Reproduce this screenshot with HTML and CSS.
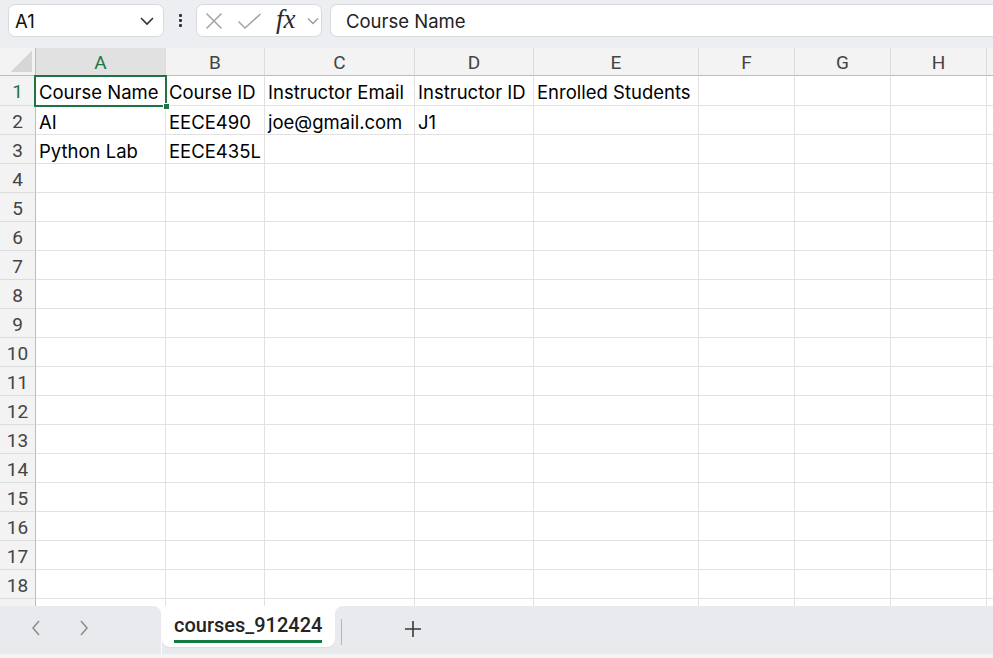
FILE: index.html
```html
<!DOCTYPE html>
<html>
<head>
<meta charset="utf-8">
<link rel="stylesheet" href="styles.css">
</head>
<body>
<div class="app">
  <div class="toolbar">
    <div class="namebox">
      <span class="nb-text">A1</span>
      <svg class="nb-chev" width="16" height="10" viewBox="0 0 16 10"><path d="M2 2 L8 8 L14 2" fill="none" stroke="#333" stroke-width="1.6"/></svg>
    </div>
    <div class="kebab"><i></i><i></i><i></i></div>
    <div class="fbox">
      <svg class="ic-x" width="18" height="18" viewBox="0 0 18 18"><path d="M1.5 1.5 L16.5 16.5 M16.5 1.5 L1.5 16.5" stroke="#a3a3a3" stroke-width="1.5" fill="none"/></svg>
      <svg class="ic-check" width="25" height="16" viewBox="0 0 25 16"><path d="M1.5 8.5 L8 15 L23.5 1" stroke="#a3a3a3" stroke-width="1.5" fill="none"/></svg>
      <span class="fx">fx</span>
      <svg class="ic-chev" width="12" height="8" viewBox="0 0 12 8"><path d="M1 1.5 L6 6.5 L11 1.5" stroke="#9a9a9a" stroke-width="1.3" fill="none"/></svg>
    </div>
    <div class="finput">Course Name</div>
  </div>

  <div class="sheet">
    <div class="grid">
      <div class="corner"></div><div class="ch sel">A</div><div class="ch">B</div><div class="ch">C</div><div class="ch">D</div><div class="ch">E</div><div class="ch">F</div><div class="ch">G</div><div class="ch">H</div><div class="ch"></div>
      <div class="rh sel">1</div><div class="c">Course Name</div><div class="c">Course ID</div><div class="c">Instructor Email</div><div class="c">Instructor ID</div><div class="c">Enrolled Students</div><div class="c"></div><div class="c"></div><div class="c"></div><div class="c"></div>
      <div class="rh">2</div><div class="c">AI</div><div class="c">EECE490</div><div class="c">joe@gmail.com</div><div class="c">J1</div><div class="c"></div><div class="c"></div><div class="c"></div><div class="c"></div><div class="c"></div>
      <div class="rh">3</div><div class="c">Python Lab</div><div class="c">EECE435L</div><div class="c"></div><div class="c"></div><div class="c"></div><div class="c"></div><div class="c"></div><div class="c"></div><div class="c"></div>
      <div class="rh">4</div><div class="c"></div><div class="c"></div><div class="c"></div><div class="c"></div><div class="c"></div><div class="c"></div><div class="c"></div><div class="c"></div><div class="c"></div>
      <div class="rh">5</div><div class="c"></div><div class="c"></div><div class="c"></div><div class="c"></div><div class="c"></div><div class="c"></div><div class="c"></div><div class="c"></div><div class="c"></div>
      <div class="rh">6</div><div class="c"></div><div class="c"></div><div class="c"></div><div class="c"></div><div class="c"></div><div class="c"></div><div class="c"></div><div class="c"></div><div class="c"></div>
      <div class="rh">7</div><div class="c"></div><div class="c"></div><div class="c"></div><div class="c"></div><div class="c"></div><div class="c"></div><div class="c"></div><div class="c"></div><div class="c"></div>
      <div class="rh">8</div><div class="c"></div><div class="c"></div><div class="c"></div><div class="c"></div><div class="c"></div><div class="c"></div><div class="c"></div><div class="c"></div><div class="c"></div>
      <div class="rh">9</div><div class="c"></div><div class="c"></div><div class="c"></div><div class="c"></div><div class="c"></div><div class="c"></div><div class="c"></div><div class="c"></div><div class="c"></div>
      <div class="rh">10</div><div class="c"></div><div class="c"></div><div class="c"></div><div class="c"></div><div class="c"></div><div class="c"></div><div class="c"></div><div class="c"></div><div class="c"></div>
      <div class="rh">11</div><div class="c"></div><div class="c"></div><div class="c"></div><div class="c"></div><div class="c"></div><div class="c"></div><div class="c"></div><div class="c"></div><div class="c"></div>
      <div class="rh">12</div><div class="c"></div><div class="c"></div><div class="c"></div><div class="c"></div><div class="c"></div><div class="c"></div><div class="c"></div><div class="c"></div><div class="c"></div>
      <div class="rh">13</div><div class="c"></div><div class="c"></div><div class="c"></div><div class="c"></div><div class="c"></div><div class="c"></div><div class="c"></div><div class="c"></div><div class="c"></div>
      <div class="rh">14</div><div class="c"></div><div class="c"></div><div class="c"></div><div class="c"></div><div class="c"></div><div class="c"></div><div class="c"></div><div class="c"></div><div class="c"></div>
      <div class="rh">15</div><div class="c"></div><div class="c"></div><div class="c"></div><div class="c"></div><div class="c"></div><div class="c"></div><div class="c"></div><div class="c"></div><div class="c"></div>
      <div class="rh">16</div><div class="c"></div><div class="c"></div><div class="c"></div><div class="c"></div><div class="c"></div><div class="c"></div><div class="c"></div><div class="c"></div><div class="c"></div>
      <div class="rh">17</div><div class="c"></div><div class="c"></div><div class="c"></div><div class="c"></div><div class="c"></div><div class="c"></div><div class="c"></div><div class="c"></div><div class="c"></div>
      <div class="rh">18</div><div class="c"></div><div class="c"></div><div class="c"></div><div class="c"></div><div class="c"></div><div class="c"></div><div class="c"></div><div class="c"></div><div class="c"></div>
      <div class="rh"></div><div class="c"></div><div class="c"></div><div class="c"></div><div class="c"></div><div class="c"></div><div class="c"></div><div class="c"></div><div class="c"></div><div class="c"></div>
    </div>
    <div class="selection"><span class="handle"></span></div>
  </div>

  <div class="tabbar">
    <div class="nav">
      <svg width="10" height="16" viewBox="0 0 10 16"><path d="M8 1 L2 8 L8 15" fill="none" stroke="#8a8a8a" stroke-width="1.5"/></svg>
      <svg width="10" height="16" viewBox="0 0 10 16"><path d="M2 1 L8 8 L2 15" fill="none" stroke="#8a8a8a" stroke-width="1.5"/></svg>
    </div>
    <div class="tabwrap"><div class="tab"><span class="tab-label">courses_912424</span></div></div>
    <div class="rest">
      <div class="sep"></div>
      <svg class="plus" width="18" height="18" viewBox="0 0 18 18"><path d="M9 1 V17 M1 9 H17" stroke="#3a3a3a" stroke-width="1.6" fill="none"/></svg>
    </div>
  </div>
  <div class="status"></div>
</div>
</body>
</html>
```

FILE: styles.css
```css
* { box-sizing: border-box; }
html, body { margin: 0; padding: 0; }
body {
  width: 993px;
  height: 658px;
  overflow: hidden;
  font-family: Inter, "Open Sans", Arial, sans-serif;
  color: #111;
  background: #fff;
}
.app { display: flex; flex-direction: column; width: 993px; height: 658px; }

/* toolbar */
.toolbar {
  height: 48px;
  flex: none;
  background: #eceef1;
  display: flex;
  align-items: flex-start;
  padding: 4px 0 0 8px;
}
.namebox {
  width: 156px;
  height: 33px;
  background: #fff;
  border: 1px solid #d8dadd;
  border-radius: 7px;
  display: flex;
  align-items: center;
  justify-content: space-between;
  padding: 0 8px 0 6px;
  font-size: 18.5px;
}
.nb-text { color: #111; }
.kebab {
  width: 32px;
  height: 33px;
  display: flex;
  flex-direction: column;
  align-items: center;
  justify-content: center;
  gap: 2px;
}
.kebab i { display: block; width: 3px; height: 3px; background: #333; border-radius: 1px; }
.fbox {
  width: 126px;
  height: 33px;
  background: #fff;
  border: 1px solid #d8dadd;
  border-radius: 7px;
  display: flex;
  align-items: center;
  padding-left: 8px;
}
.ic-x { margin-right: 14px; }
.ic-check { margin-right: 14px; }
.fx {
  font-family: "Liberation Serif", "DejaVu Serif", serif;
  font-style: italic;
  font-size: 27px;
  color: #2a2a2a;
  line-height: 1;
  margin-right: 11px;
  margin-top: -2px;
}
.finput {
  flex: 1;
  height: 33px;
  margin-left: 8px;
  background: #fff;
  border: 1px solid #d8dadd;
  border-right: none;
  border-radius: 7px 0 0 7px;
  display: flex;
  align-items: center;
  padding-left: 15px;
  font-size: 18.5px;
  color: #222;
}

/* sheet */
.sheet {
  position: relative;
  height: 558px;
  flex: none;
  overflow: hidden;
}
.grid {
  display: grid;
  grid-template-columns: 36px 130px 99px 150px 119px 165px 96px 96px 96px 96px;
  grid-template-rows: 28px 30px repeat(18, 29px);
}
.c {
  border-right: 1px solid #e1e1e1;
  border-bottom: 1px solid #e1e1e1;
  padding: 3px 0 0 3px;
  font-size: 18.5px;
  white-space: nowrap;
  display: flex;
  align-items: center;
  color: #000;
}
.corner {
  background: #f3f3f3 linear-gradient(135deg, transparent 50%, #d6d6d6 50%) no-repeat right 3px bottom 3px / 21px 21px;
  border-right: 1px solid #bdbdbd;
  border-bottom: 1px solid #bdbdbd;
}
.ch {
  background: #f3f3f3;
  border-right: 1px solid #dcdcdc;
  border-bottom: 1px solid #bdbdbd;
  display: flex;
  align-items: center;
  justify-content: center;
  padding-top: 1px;
  font-family: Roboto, "Liberation Sans", sans-serif;
  font-size: 19px;
  color: #444;
}
.ch.sel { background: #e1e1e1; color: #217346; }
.rh {
  background: #f3f3f3;
  border-right: 1px solid #bdbdbd;
  border-bottom: 1px solid #dcdcdc;
  display: flex;
  align-items: center;
  justify-content: center;
  padding-top: 2px;
  font-family: Roboto, "Liberation Sans", sans-serif;
  font-size: 19px;
  color: #444;
}
.rh.sel { color: #217346; }
.selection {
  position: absolute;
  left: 34px;
  top: 27px;
  width: 133px;
  height: 32px;
  border: 2px solid #217346;
}
.handle {
  position: absolute;
  right: -5px;
  bottom: -5px;
  width: 7px;
  height: 7px;
  background: #217346;
  border: 1px solid #fff;
}

/* tab bar */
.tabbar {
  height: 48px;
  flex: none;
  display: flex;
  background: #fff;
}
.nav {
  width: 161px;
  background: #e9eaed;
  border-top-right-radius: 8px;
  display: flex;
  align-items: center;
  padding: 0 0 4px 31px;
  gap: 38px;
}
.tabwrap {
  width: 173px;
  margin-left: 1px;
  background: #e9eaed;
}
.tab {
  height: 41px;
  background: #fff;
  border-radius: 0 0 8px 8px;
  box-shadow: 0 1px 1px rgba(0,0,0,0.06);
  padding: 7px 0 0 12px;
}
.tab-label {
  display: inline-block;
  font-family: Roboto, "Liberation Sans", sans-serif;
  font-weight: 500;
  font-size: 20px;
  color: #242424;
  line-height: 25px;
  padding-bottom: 2px;
  border-bottom: 3px solid #107c41;
}
.rest {
  flex: 1;
  background: #e9eaed;
  border-top-left-radius: 8px;
  display: flex;
  align-items: center;
  padding-bottom: 2px;
}
.sep { width: 1px; height: 26px; background: #b5b5b5; margin-left: 6px; margin-top: 6px; }
.plus { margin-left: 62px; }
.status { height: 4px; flex: none; background: #f4f4f4; }
```
